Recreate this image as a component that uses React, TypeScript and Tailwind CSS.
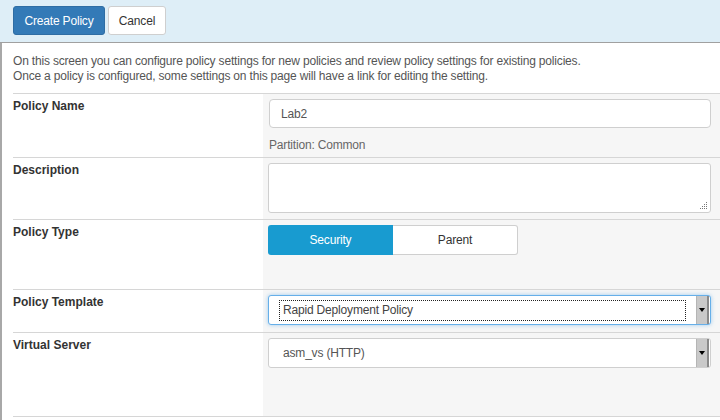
const font = { fontFamily: '"Liberation Sans", Arial, sans-serif' };

const Row = ({
  label,
  height,
  children,
}: {
  label: string;
  height: string;
  children: React.ReactNode;
}) => (
  <div className={`flex border-t border-[#d6d6d6] ${height}`}>
    <div className="w-[250px] shrink-0 pt-[4px] text-xs font-bold tracking-normal text-[#333]">{label}</div>
    <div className="flex-1 bg-[#f6f6f6] pl-[5px] pr-[9px] pt-[5px]">{children}</div>
  </div>
);

const Arrow = () => (
  <div className="flex h-full w-[13px] items-center justify-center bg-[#c9c9c9] border-l border-[#b5b5b5] border-r-2 border-r-[#8a8a8a]">
    <div className="h-0 w-0 border-x-[3px] border-t-[4px] border-x-transparent border-t-black" />
  </div>
);

export default function App() {
  return (
    <div className="h-[420px] w-[720px] overflow-hidden bg-white text-xs tracking-[-0.18px]" style={font}>
      <div className="flex h-[43px] items-start gap-[3px] border-b border-[#a0a0a0] bg-[#deeef7] pl-[13px] pt-[6px]">
        <button className="h-[29px] w-[92px] rounded-[3px] border border-[#2e6da4] bg-[#337ab7] text-xs text-white">
          Create Policy
        </button>
        <button className="h-[29px] w-[58px] rounded-[3px] border border-[#cfcfcf] bg-white text-xs text-[#333]">
          Cancel
        </button>
      </div>

      <div className="h-[377px] border-l-2 border-[#a8a8a8] pl-[11px]">
        <div className="h-[50px] pt-[11px] leading-[15px] text-[#555]">
          <p>On this screen you can configure policy settings for new policies and review policy settings for existing policies.</p>
          <p>Once a policy is configured, some settings on this page will have a link for editing the setting.</p>
        </div>

        <Row label="Policy Name" height="h-[64px]">
          <div className="flex h-[29px] items-center rounded-[4px] border border-[#cfcfcf] bg-white pl-[11px] text-[#555] ml-px">
            Lab2
          </div>
          <div className="mt-[9px] pl-px text-[#666]">Partition: Common</div>
        </Row>

        <Row label="Description" height="h-[62px]">
          <div className="relative h-[50px] rounded-[3px] border border-[#cfcfcf] bg-white">
            <svg className="absolute bottom-[2px] right-[2px]" width="9" height="9" viewBox="0 0 9 9">
              {[
                [7, 1],
                [5, 3],
                [7, 3],
                [3, 5],
                [5, 5],
                [7, 5],
                [1, 7],
                [3, 7],
                [5, 7],
                [7, 7],
              ].map(([x, y], i) => (
                <rect key={i} x={x} y={y} width="1" height="1" fill="#777" />
              ))}
            </svg>
          </div>
        </Row>

        <Row label="Policy Type" height="h-[70px]">
          <div className="flex h-[30px] w-[250px]">
            <div className="flex w-[125px] items-center justify-center rounded-l-[3px] bg-[#189bd0] text-white">
              Security
            </div>
            <div className="flex flex-1 items-center justify-center rounded-r-[3px] border border-l-0 border-[#cfcfcf] bg-white text-[#333]">
              Parent
            </div>
          </div>
        </Row>

        <Row label="Policy Template" height="h-[43px]">
          <div className="flex h-[30px] items-center rounded-[3px] border border-[#66afe9] bg-white pl-[10px] pr-px shadow-[0_0_4px_rgba(102,175,233,0.6)]">
            <div className="flex h-[21px] flex-1 items-center border border-dotted border-[#222] pl-[3px] text-[#444]">
              Rapid Deployment Policy
            </div>
            <div className="ml-[10px] h-[28px]">
              <Arrow />
            </div>
          </div>
        </Row>

        <Row label="Virtual Server" height="h-[84px]">
          <div className="flex h-[30px] items-center rounded-[3px] border border-[#cfcfcf] bg-white pl-[14px] pr-px">
            <div className="flex-1 text-[#555]">asm_vs (HTTP)</div>
            <div className="h-[28px]">
              <Arrow />
            </div>
          </div>
        </Row>
        <div className="border-t border-[#d6d6d6]" />
      </div>
    </div>
  );
}
